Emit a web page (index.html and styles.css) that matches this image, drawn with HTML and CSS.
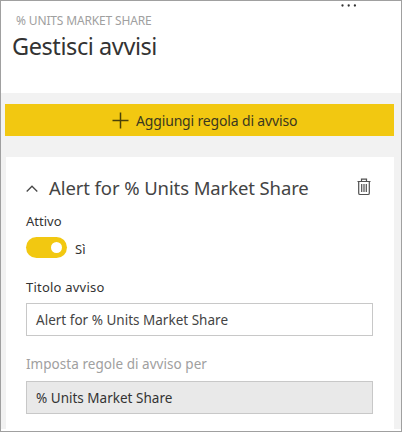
FILE: index.html
```
<!DOCTYPE html>
<html lang="it">
<head>
<meta charset="utf-8">
<title>Gestisci avvisi</title>
<link rel="stylesheet" href="styles.css">
</head>
<body>
<main class="panel">
  <header class="header">
    <div class="heading">
      <p class="eyebrow"><span>% UNITS MARKET SHARE</span></p>
      <h1 class="title"><span>Gestisci avvisi</span></h1>
    </div>
    <svg class="more" width="16" height="4" viewBox="0 0 16 4"><g fill="#333"><circle cx="1.500" cy="2.500" r="1.150"/><circle cx="7.700" cy="2.500" r="1.150"/><circle cx="13.900" cy="2.500" r="1.150"/></g></svg>
  </header>
  <section class="content">
    <button class="add" type="button">
      <svg width="17" height="17" viewBox="0 0 17 17"><path d="M8.500 .5v16M.5 8.500h16" stroke="#4a4108" stroke-width="1.500"/></svg>
      <span>Aggiungi regola di avviso</span>
    </button>
    <article class="card">
      <div class="rule-head">
        <svg class="chevron" width="12" height="8" viewBox="0 0 12 8"><path d="M.7 7.500 6 2.200 11.300 7.500" fill="none" stroke="#484848" stroke-width="1.300"/></svg>
        <h2 class="rule-title"><span>Alert for % Units Market Share</span></h2>
        <svg class="trash" width="14" height="18" viewBox="0 0 14 18"><path d="M.5 3.500h13M4.500 3.200V1.200h5v2M1.700 3.500v11.700q0 1.300 1.300 1.300h8q1.300 0 1.300-1.300V3.500M4.700 6v8M7 6v8M9.300 6v8" fill="none" stroke="#505050" stroke-width="1.200"/></svg>
      </div>
      <p class="label active-label"><span>Attivo</span></p>
      <div class="switch-row"><div class="switch"><i class="knob"></i></div><span class="state">Sì</span></div>
      <p class="label name-label"><span>Titolo avviso</span></p>
      <div class="field"><span class="name-value">Alert for % Units Market Share</span></div>
      <p class="label for-label"><span>Imposta regole di avviso per</span></p>
      <div class="field locked"><span class="for-value">% Units Market Share</span></div>
    </article>
  </section>
</main>
</body>
</html>
```
FILE: styles.css
```
* { box-sizing: border-box; }
body { margin: 0; font-family: "Noto Sans", "Open Sans", sans-serif; color: #333; }
h1, h2, p { margin: 0; font-weight: 400; white-space: nowrap; }
svg { display: block; flex: none; }
.panel { width: 402px; height: 432px; border: 1px solid #a0a0a0; background: #fff; display: flex; flex-direction: column; overflow: hidden; }
.header { height: 92px; flex: none; display: flex; justify-content: space-between; padding: 2px 44px 0 11px; }
.heading { padding-top: 9px; }
.eyebrow { padding-left: 4px; font-size: 12px; line-height: 17px; letter-spacing: -.15px; color: #a0a0a0; }
.title { font-size: 23.5px; line-height: 34px; letter-spacing: -.42px; }
.content { height: 336px; background: #f2f2f2; padding: 11px 7px 0 4px; }
.add { display: flex; align-items: center; width: 389px; height: 32px; padding: 0 0 0 107px; border: 0; background: #f2c811; color: #3b381f; font: 14px "Noto Sans", sans-serif; letter-spacing: -.16px; gap: 7px; white-space: nowrap; }
.card { height: 272px; margin: 21px 0 0 1px; padding: 17px 21px 0 20px; background: #fff; }
.rule-head { display: flex; height: 28px; align-items: center; }
.chevron { margin-right: 11px; }
.rule-title { font-size: 18.5px; line-height: 28px; letter-spacing: -.1px; color: #444; flex: 1; }
.trash { margin: 0 2px 2px 0; }
.label { font-size: 13px; line-height: 18px; color: #333; }
.active-label { margin-top: 10px; }
.switch-row { display: flex; align-items: center; height: 21px; margin-top: 7px; gap: 8px; }
.switch { width: 41px; height: 21px; border-radius: 11px; background: #f2c811; display: flex; align-items: center; justify-content: flex-end; padding-right: 5px; }
.knob { width: 11px; height: 11px; border-radius: 50%; background: #fff; }
.state { font-size: 13px; line-height: 18px; padding-top: 2px; }
.name-label { margin-top: 20px; letter-spacing: .22px; }
.field { width: 347px; height: 33px; margin-top: 7px; border: 1px solid #c8c8c8; padding: 2px 9px 0; font-size: 13.5px; line-height: 29px; letter-spacing: .01px; white-space: nowrap; color: #444; }
.for-label { margin-top: 19px; color: #a0a0a0; font-size: 13.5px; letter-spacing: .04px; }
.locked { margin-top: 8px; background: #e9e9e9; color: #333; }
```
